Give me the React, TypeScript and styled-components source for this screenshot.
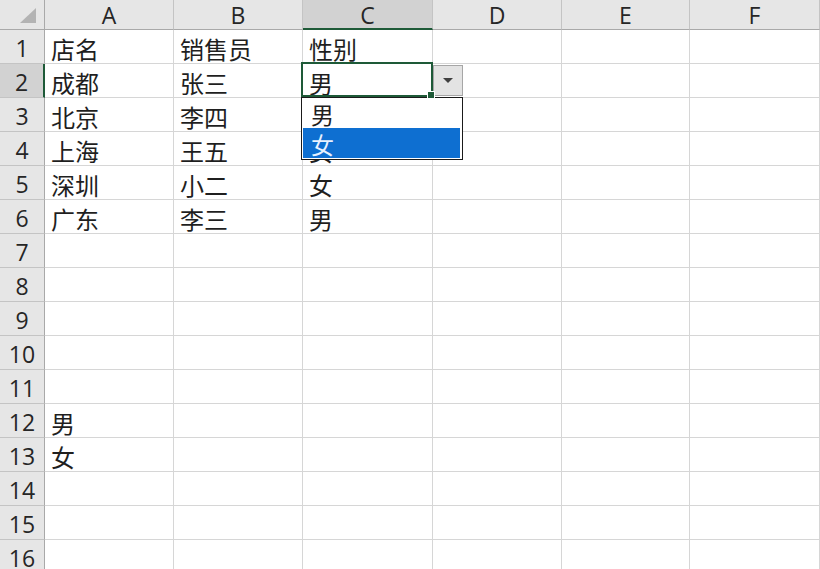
import React from "react";
import styled, { createGlobalStyle, css } from "styled-components";

const Global = createGlobalStyle`
  html, body { margin: 0; padding: 0; background: #ffffff; overflow: hidden; }
  body { font-family: "Open Sans", "Noto Sans CJK SC", sans-serif; }
`;

const COLS = ["A", "B", "C", "D", "E", "F"];
const COL_WIDTHS = [129, 129, 130, 129, 128, 130];
const ROW_COUNT = 16;

const data: Record<string, string> = {
  A1: "店名", B1: "销售员", C1: "性别",
  A2: "成都", B2: "张三", C2: "男",
  A3: "北京", B3: "李四",
  A4: "上海", B4: "王五", C4: "女",
  A5: "深圳", B5: "小二", C5: "女",
  A6: "广东", B6: "李三", C6: "男",
  A12: "男",
  A13: "女",
};

const SELECTED_COL = "C";
const SELECTED_ROW = 2;

const Sheet = styled.div`
  display: grid;
  grid-template-columns: 45px ${COL_WIDTHS.map((w) => `${w}px`).join(" ")};
  grid-template-rows: 30px repeat(${ROW_COUNT}, 34px);
  width: 820px;
  height: 569px;
  overflow: hidden;
  background: #ffffff;
`;

const Corner = styled.div`
  display: flex;
  align-items: flex-end;
  justify-content: flex-end;
  padding: 0 8px 6px 0;
  background: #e6e6e6;
  border-right: 1px solid #a9a9a9;
  border-bottom: 1px solid #a9a9a9;
  box-sizing: border-box;
`;

const CornerTriangle = styled.div`
  width: 0;
  height: 0;
  border-left: 16px solid transparent;
  border-bottom: 15px solid #b3b3b3;
`;

const HeaderBase = css`
  display: flex;
  align-items: center;
  justify-content: center;
  box-sizing: border-box;
  font-family: "Open Sans", sans-serif;
  font-size: 23px;
  color: #262626;
  line-height: 1;
`;

const ColHeader = styled.div<{ $active: boolean }>`
  ${HeaderBase};
  background: ${(p) => (p.$active ? "#d2d2d2" : "#e6e6e6")};
  border-right: 1px solid #c4c4c4;
  border-bottom: ${(p) => (p.$active ? "2px solid #1e5a38" : "1px solid #a9a9a9")};
  padding-top: 2px;
`;

const RowHeader = styled.div<{ $active: boolean }>`
  ${HeaderBase};
  background: ${(p) => (p.$active ? "#d2d2d2" : "#e6e6e6")};
  border-bottom: 1px solid #c4c4c4;
  border-right: ${(p) => (p.$active ? "2px solid #1e5a38" : "1px solid #a9a9a9")};
  padding-top: 3px;
`;

const Cell = styled.div<{ $raised?: boolean }>`
  position: relative;
  display: flex;
  align-items: center;
  box-sizing: border-box;
  border-right: 1px solid #d6d6d6;
  border-bottom: 1px solid #d6d6d6;
  padding: 3px 0 0 6px;
  font-family: "Noto Sans CJK SC", "Noto Sans", sans-serif;
  font-size: 24px;
  color: #1f1f1f;
  white-space: nowrap;
  ${(p) =>
    p.$raised &&
    css`
      z-index: 2;
      overflow: visible;
    `}
`;

/* Overlay for the active cell: selection frame, drop button and list */
const DropdownOverlay = styled.div`
  position: absolute;
  left: -2px;
  top: -2px;
  display: grid;
  grid-template-columns: 132px 30px;
  grid-template-rows: 35px 63px;
  pointer-events: none;
`;

const SelectionBox = styled.div`
  position: relative;
  box-sizing: border-box;
  border: 2px solid #1e5a38;
`;

const FillHandle = styled.div`
  position: absolute;
  right: -4px;
  bottom: -4px;
  width: 6px;
  height: 6px;
  background: #1e5a38;
  border: 1px solid #ffffff;
`;

const DropButton = styled.div`
  margin-top: 3px;
  height: 31px;
  box-sizing: border-box;
  background: #e3e3e3;
  border: 1px solid #a6a6a6;
  display: flex;
  align-items: center;
  justify-content: center;
`;

const Arrow = styled.div`
  width: 0;
  height: 0;
  border-left: 5px solid transparent;
  border-right: 5px solid transparent;
  border-top: 5px solid #404040;
`;

const ListBox = styled.div`
  grid-column: 1 / span 2;
  box-sizing: border-box;
  background: #ffffff;
  border: 1px solid #1a1a1a;
  padding: 0 2px 2px 1px;
  display: flex;
  flex-direction: column;
`;

const ListItem = styled.div<{ $highlight?: boolean }>`
  height: 30px;
  display: flex;
  align-items: center;
  padding: 2px 0 0 8px;
  box-sizing: border-box;
  font-family: "Noto Sans CJK SC", "Noto Sans", sans-serif;
  font-size: 23px;
  color: ${(p) => (p.$highlight ? "#e8f2ff" : "#1f1f1f")};
  background: ${(p) => (p.$highlight ? "#0e6fd1" : "transparent")};
`;

export default function App() {
  const cells: React.ReactNode[] = [];
  cells.push(
    <Corner key="corner">
      <CornerTriangle />
    </Corner>
  );
  COLS.forEach((c) => {
    cells.push(
      <ColHeader key={`h-${c}`} $active={c === SELECTED_COL}>
        {c}
      </ColHeader>
    );
  });
  for (let r = 1; r <= ROW_COUNT; r++) {
    cells.push(
      <RowHeader key={`r-${r}`} $active={r === SELECTED_ROW}>
        {r}
      </RowHeader>
    );
    COLS.forEach((c) => {
      const id = `${c}${r}`;
      const isSel = c === SELECTED_COL && r === SELECTED_ROW;
      cells.push(
        <Cell key={id} $raised={isSel}>
          {data[id] ?? ""}
          {isSel && (
            <DropdownOverlay>
              <SelectionBox>
                <FillHandle />
              </SelectionBox>
              <DropButton>
                <Arrow />
              </DropButton>
              <ListBox>
                <ListItem>男</ListItem>
                <ListItem $highlight>女</ListItem>
              </ListBox>
            </DropdownOverlay>
          )}
        </Cell>
      );
    });
  }
  return (
    <>
      <Global />
      <Sheet>{cells}</Sheet>
    </>
  );
}
